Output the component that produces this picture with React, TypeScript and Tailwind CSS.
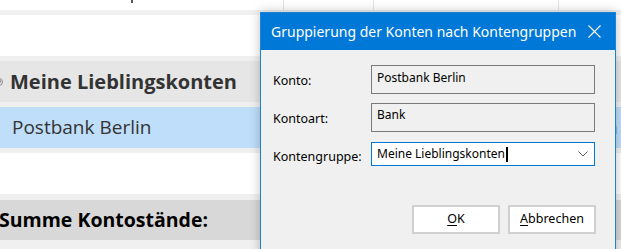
export default function App() {
  return (
    <div className="relative w-[621px] h-[249px] overflow-hidden bg-[#f0f0f0] font-['Open_Sans',sans-serif]">
      {/* background list */}
      <div className="flex flex-col">
        <div className="flex h-[10px] bg-white">
          <div className="w-[284px] border-r border-[#e3e3e3] relative">
            <div className="ml-[131px] w-[2px] h-[3px] bg-[#555]" />
          </div>
          <div className="w-[90px] border-r border-[#e3e3e3]" />
          <div className="w-[185px] border-r border-[#e3e3e3]" />
          <div className="flex-1" />
        </div>
        <div className="mt-[5px] h-[41px] bg-white" />
        <div className="mt-[5px] h-[41px] bg-[#e6e6e6] flex items-center">
          <div className="ml-[-5px] w-[8px] h-[8px] rounded-full border border-[#8a8a8a] flex items-center justify-center">
            <div className="w-[3px] h-[3px] rounded-full bg-[#8a8a8a]" />
          </div>
          <span className="ml-[7px] text-[20px] font-bold text-[#333] leading-none">Meine Lieblingskonten</span>
        </div>
        <div className="mt-[5px] h-[41px] bg-[#bfdefa] flex items-center">
          <span className="w-[606px] pl-[12px] text-[19px] text-[#333] leading-none">Postbank Berlin</span>
          <span className="text-[19px] text-[#333] leading-none">n</span>
        </div>
        <div className="mt-[5px] h-[41px] bg-white" />
        <div className="mt-[6px] h-[40px] bg-[#d8d8d8] flex items-center">
          <span className="ml-[-1px] text-[19.5px] font-bold text-black leading-none">Summe Kontostände:</span>
        </div>
      </div>

      {/* dialog window */}
      <div className="absolute left-[260px] top-[12px] w-[356px] h-[260px] border border-[#1883d7] bg-[#f0f0f0] shadow-[0_0_10px_rgba(0,0,0,0.25)] flex flex-col font-['Noto_Sans',sans-serif]">
        <div className="h-[37px] bg-[#0078d7] flex items-center pl-[10px] pr-[14px] shrink-0">
          <span className="flex-1 whitespace-nowrap text-white text-[14px] leading-none">Gruppierung der Konten nach Kontengruppen</span>
          <svg width="13" height="13" viewBox="0 0 13 13" className="block">
            <path d="M0.5 0.5 L12.5 12.5 M12.5 0.5 L0.5 12.5" stroke="white" strokeWidth="1.1" fill="none" />
          </svg>
        </div>
        <div className="flex flex-col pl-[12px] pr-[20px]">
          <div className="mt-[15px] flex h-[29px]">
            <span className="w-[98px] self-center mt-[3px] text-[12.5px] text-black leading-none">Konto:</span>
            <div className="flex-1 border border-[#7a7a7a] bg-[#f0f0f0] pl-[5px] pt-[4px] text-[12px] text-black leading-[16px]">Postbank Berlin</div>
          </div>
          <div className="mt-[9px] flex h-[29px]">
            <span className="w-[98px] self-center mt-[3px] text-[12.5px] text-black leading-none">Kontoart:</span>
            <div className="flex-1 border border-[#7a7a7a] bg-[#f0f0f0] pl-[5px] pt-[3px] text-[12px] text-black leading-[16px]">Bank</div>
          </div>
          <div className="mt-[10px] flex h-[24px]">
            <span className="w-[98px] self-center mt-[6px] text-[12.5px] text-black leading-none">Kontengruppe:</span>
            <div className="flex-1 border border-[#0078d7] bg-white flex items-center pl-[5px] pr-[6px]">
              <span className="text-[12px] text-black leading-none">Meine Lieblingskonten</span>
              <div className="ml-[1px] w-[2px] h-[15px] bg-black" />
              <div className="flex-1" />
              <svg width="10" height="6" viewBox="0 0 10 6" className="block">
                <path d="M0.5 0.5 L5 5 L9.5 0.5" stroke="#606060" strokeWidth="1" fill="none" />
              </svg>
            </div>
          </div>
          <div className="mt-[39px] flex justify-end gap-[8px] mr-[-1px]">
            <div className="w-[88px] h-[29px] border-2 border-[#d0d0d0] bg-white flex items-center justify-center text-[12.5px] text-black leading-none">
              <span><span className="underline underline-offset-2">O</span>K</span>
            </div>
            <div className="w-[88px] h-[29px] border-2 border-[#d0d0d0] bg-white flex items-center justify-center text-[12.5px] text-black leading-none">
              <span><span className="underline underline-offset-2">A</span>bbrechen</span>
            </div>
          </div>
        </div>
      </div>
    </div>
  );
}
